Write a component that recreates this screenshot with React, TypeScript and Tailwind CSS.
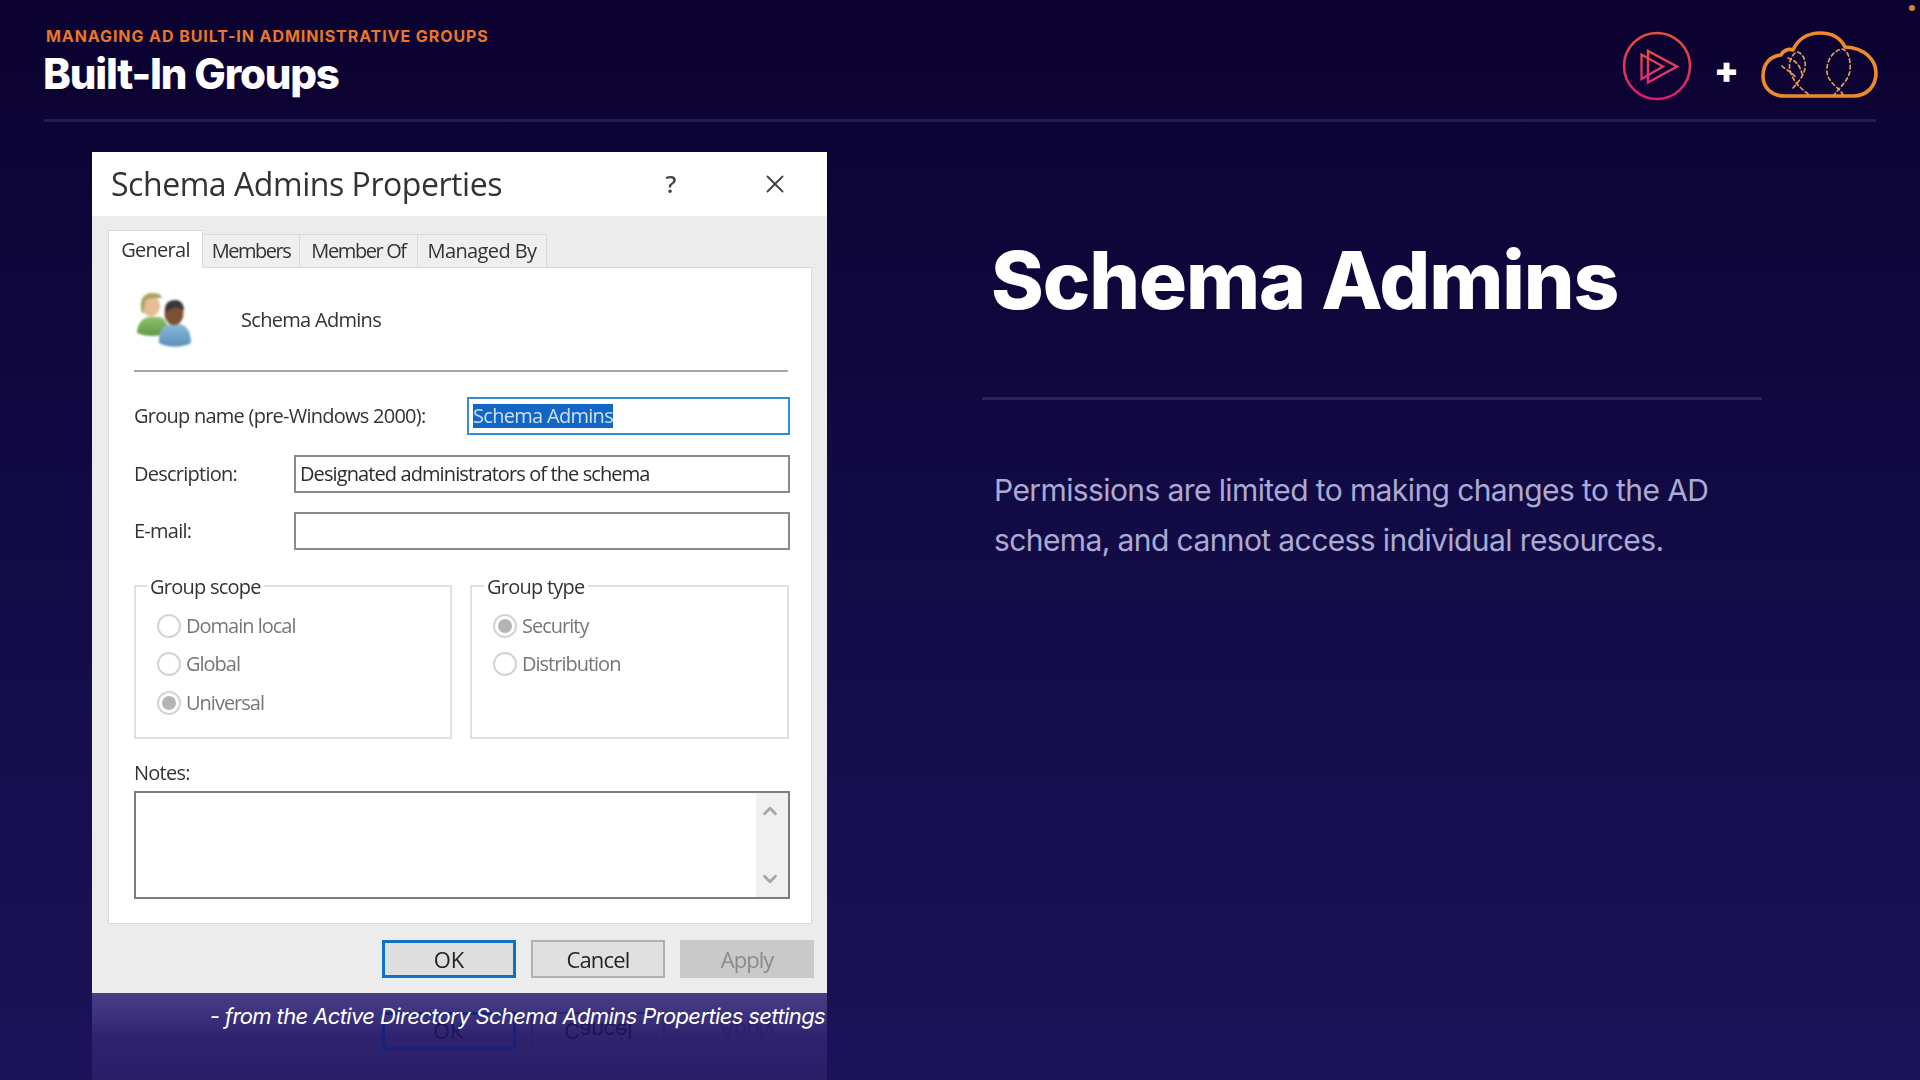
import { ChevronDown, ChevronUp, X } from 'lucide-react';

const dialogFont = { fontFamily: '"Open Sans", "Noto Sans", sans-serif' };

function PluralsightLogo() {
  return (
    <svg width="72" height="72" viewBox="0 0 72 72" fill="none" className="shrink-0">
      <defs>
        <linearGradient id="ps" x1="0" y1="0" x2="0" y2="1">
          <stop offset="0" stopColor="#e8503f" />
          <stop offset="1" stopColor="#e0186f" />
        </linearGradient>
        <linearGradient id="pt" gradientUnits="userSpaceOnUse" x1="0" y1="18" x2="0" y2="54">
          <stop offset="0" stopColor="#e8503f" />
          <stop offset="1" stopColor="#e0287a" />
        </linearGradient>
      </defs>
      <circle cx="37" cy="35" r="33" stroke="url(#ps)" strokeWidth="2.6" />
      <path d="M28 20V51.5L57 35.5Z" stroke="url(#pt)" strokeWidth="2.4" />
      <path d="M21.5 23.5V48L43 35.5Z" stroke="url(#pt)" strokeWidth="2.2" />
    </svg>
  );
}

function CloudLogo() {
  return (
    <svg width="118" height="68" viewBox="11 11 118 68" fill="none" className="-mr-[3px] shrink-0">
      <path
        d="M34 76H103C117 76 126 66 126 53C126 40 115 28 95 27C90 17 80 13 70 13C58 13 48 19 43 30C38 28 33 31 31 35C20 36 13 44 13 56C13 68 22 76 34 76Z"
        stroke="#ee8a2a"
        strokeWidth="3.6"
        strokeLinejoin="round"
      />
      <g stroke="#e59a5a" strokeWidth="1.7" strokeDasharray="3.5 3" strokeLinecap="round">
        <path d="M93 75C90 68 78 63 77 52C76 40 84 30 92 29C98 30 101 40 100 50C99 60 90 67 84 75" />
        <path d="M58 74C50 68 42 60 40 50C38 42 42 34 47 32C53 33 56 40 55 48C54 56 48 62 43 68" />
        <path d="M32 46C36 50 42 52 46 58" />
        <path d="M38 38C44 40 50 44 52 54" />
      </g>
    </svg>
  );
}

function GroupIcon() {
  return (
    <svg width="60" height="60" viewBox="0 0 60 60" className="mt-[2px] shrink-0 blur-[0.8px]">
      <defs>
        <linearGradient id="gr" x1="0" y1="0" x2="0" y2="1">
          <stop offset="0" stopColor="#8dc26a" />
          <stop offset="1" stopColor="#5f9a45" />
        </linearGradient>
        <linearGradient id="bl" x1="0" y1="0" x2="0" y2="1">
          <stop offset="0" stopColor="#8cbbdc" />
          <stop offset="1" stopColor="#5a8fb8" />
        </linearGradient>
      </defs>
      <path d="M3 42C3 32 9 27 15 26H25C31 27 34 32 34 42C24 46 12 46 3 42Z" fill="url(#gr)" />
      <ellipse cx="17" cy="15" rx="9" ry="10.5" fill="#e6bd97" />
      <path d="M7 17C6 7 11 2 18 2C23 2 27 3 28 7C22 7 15 7 12 9C11 12 10 19 9 23C8 22 7 20 7 17Z" fill="#a9a35f" />
      <path d="M25 52C24 40 30 33 38 33H44C52 33 57 40 57 52C48 57 34 57 25 52Z" fill="url(#bl)" />
      <ellipse cx="40" cy="23" rx="9.5" ry="11" fill="#7a5135" />
      <path d="M31 22C30 12 35 9 41 9C47 9 50 13 50 20C46 15 38 15 31 22Z" fill="#3b3636" />
    </svg>
  );
}

function Tab({ label, active, className }: { label: string; active?: boolean; className: string }) {
  if (active) {
    return (
      <div className={`-mb-px z-10 flex h-[38px] items-center justify-center border border-b-0 border-[#d9d9d9] bg-white text-[20px] text-[#333] ${className}`}>
        {label}
      </div>
    );
  }
  return (
    <div className={`flex h-[33px] items-center justify-center border border-b-0 border-l-0 border-[#d9d9d9] bg-[#efefef] text-[20px] text-[#333] ${className}`}>
      {label}
    </div>
  );
}

function Radio({ label, checked, className }: { label: string; checked?: boolean; className?: string }) {
  return (
    <div className={`flex h-[24px] items-center gap-[5px] ${className ?? ''}`}>
      <span className="flex h-[24px] w-[24px] items-center justify-center rounded-full border-2 border-[#d4d4d4] bg-white">
        {checked && <span className="h-[14px] w-[14px] rounded-full bg-[#b4b4b4]" />}
      </span>
      <span className="text-[20px] tracking-[-1px] text-[#777]">{label}</span>
    </div>
  );
}

function Field({ label, value, labelWidth }: { label: string; value?: string; labelWidth: string }) {
  return (
    <div className="flex h-[38px] items-center">
      <span className={`text-[20px] tracking-[-0.75px] text-[#333] ${labelWidth}`}>{label}</span>
      <div className="flex h-[38px] w-[496px] items-center border-2 border-[#8a8a8a] bg-white pl-[4px] text-[20px] tracking-[-0.9px] text-[#2c2c2c]">
        {value}
      </div>
    </div>
  );
}

function ActionButtons() {
  return (
    <div className="flex justify-end gap-[15px]">
      <div className="flex h-[38px] w-[134px] items-center justify-center border-[3px] border-[#0f72c6] bg-[#dedede] text-[22px] text-[#222]">
        OK
      </div>
      <div className="flex h-[38px] w-[134px] items-center justify-center border-2 border-[#b0b0b0] bg-[#e0e0e0] text-[22px] tracking-[-0.8px] text-[#222]">
        Cancel
      </div>
      <div className="flex h-[38px] w-[134px] items-center justify-center bg-[#c9c9c9] text-[22px] tracking-[-1px] text-[#8a8a8a]">
        Apply
      </div>
    </div>
  );
}

// faint mirror image of the dialog buttons under the window
function ButtonReflection() {
  return (
    <div className="flex w-[722px] -scale-y-100 justify-end gap-[15px] blur-[0.7px]">
      <div className="flex h-[38px] w-[134px] items-center justify-center border-[3px] border-[#16237e] text-[22px] text-[#1c1654]">
        OK
      </div>
      <div className="flex h-[38px] w-[134px] items-center justify-center border-2 border-[#2b2169] text-[22px] tracking-[-0.8px] text-[#1c1654]">
        Cancel
      </div>
      <div className="flex h-[38px] w-[134px] items-center justify-center text-[22px] tracking-[-1px] text-[#2b2169]">
        Apply
      </div>
    </div>
  );
}

function Dialog() {
  return (
    <div className="flex h-[841px] w-[735px] flex-col bg-[#ececec] blur-[0.35px]" style={dialogFont}>
      <div className="flex h-[64px] items-center bg-white pl-[19px]">
        <span className="w-[550px] text-[32px] tracking-[-0.45px] text-[#333]">Schema Admins Properties</span>
        <span className="w-[20px] text-center text-[24px] font-semibold text-[#444]">?</span>
        <X className="ml-[79px] text-[#444]" size={30} strokeWidth={1.5} />
      </div>

      <div className="pl-[16px] pt-[14px]">
        <div className="flex h-[37px] items-end">
          <Tab label="General" active className="w-[95px] tracking-[-0.7px]" />
          <Tab label="Members" className="w-[97px] tracking-[-1.5px]" />
          <Tab label="Member Of" className="w-[118px] tracking-[-1.4px]" />
          <Tab label="Managed By" className="w-[129px] tracking-[-0.6px]" />
        </div>

        <div className="h-[657px] w-[704px] border border-[#d9d9d9] bg-white pl-[25px]">
          <div className="mt-[24px] flex h-[56px] items-center">
            <GroupIcon />
            <span className="ml-[47px] text-[20px] tracking-[-0.7px] text-[#333]">Schema Admins</span>
          </div>
          <div className="mt-[22px] h-[2px] w-[654px] bg-[#a6a6a6]" />

          <div className="mt-[25px] flex h-[38px] items-center">
            <span className="w-[333px] text-[20px] tracking-[-0.75px] text-[#333]">Group name (pre-Windows 2000):</span>
            <div className="flex h-[38px] w-[323px] items-center border-2 border-[#2f8fd8] bg-white pl-[4px]">
              <span className="bg-[#1166c6] text-[20px] leading-[24px] tracking-[-0.7px] text-[#cfe0f4]">Schema Admins</span>
            </div>
          </div>
          <div className="mt-[20px]">
            <Field label="Description:" value="Designated administrators of the schema" labelWidth="w-[160px]" />
          </div>
          <div className="mt-[19px]">
            <Field label="E-mail:" labelWidth="w-[160px]" />
          </div>

          <div className="mt-[35px] flex gap-[18px]">
            <div className="relative h-[154px] w-[318px] border-2 border-[#e0e0e0] pl-[21px] pt-[27px]">
              <span className="absolute -top-[15px] left-[11px] bg-white px-[3px] text-[20px] tracking-[-0.75px] text-[#333]">Group scope</span>
              <Radio label="Domain local" />
              <Radio label="Global" className="mt-[14px]" />
              <Radio label="Universal" checked className="mt-[15px]" />
            </div>
            <div className="relative h-[154px] w-[319px] border-2 border-[#e0e0e0] pl-[21px] pt-[27px]">
              <span className="absolute -top-[15px] left-[12px] bg-white px-[3px] text-[20px] tracking-[-0.75px] text-[#333]">Group type</span>
              <Radio label="Security" checked />
              <Radio label="Distribution" className="mt-[14px]" />
            </div>
          </div>

          <div className="mt-[22px] h-[24px] text-[20px] leading-[24px] tracking-[-0.75px] text-[#333]">Notes:</div>
          <div className="mt-[6px] flex h-[108px] w-[656px] justify-end border-2 border-[#7d7d7d] bg-white">
            <div className="flex w-[32px] flex-col items-center justify-between bg-[#f0f0f0] py-[7px] pr-[5px]">
              <ChevronUp className="text-[#a6a6a6]" size={22} strokeWidth={3} />
              <ChevronDown className="text-[#a6a6a6]" size={22} strokeWidth={3} />
            </div>
          </div>
        </div>

        <div className="mt-[16px] w-[706px]">
          <ActionButtons />
        </div>
      </div>
    </div>
  );
}

export default function App() {
  return (
    <div
      className="relative h-[1080px] w-[1920px] overflow-hidden bg-gradient-to-b from-[#0b0230] via-[#130c48] via-55% to-[#1b1258] px-[44px]"
      style={{ fontFamily: 'Inter, sans-serif' }}
    >
      <span className="absolute right-[5px] top-[5px] h-[6px] w-[6px] rounded-full bg-[#e0813a]" />

      <header className="flex h-[119px] items-start justify-between">
        <div className="pt-[25px]">
          <p className="pl-[2px] text-[16px] font-bold leading-[22px] tracking-[0.92px] text-[#e8762b]">
            MANAGING AD BUILT-IN ADMINISTRATIVE GROUPS
          </p>
          <h1 className="-ml-[1px] mt-[2px] text-[42px] font-extrabold leading-[50px] tracking-[-1.2px] text-white">Built-In Groups</h1>
        </div>
        <div className="flex items-start pt-[31px]">
          <PluralsightLogo />
          <span className="mx-[22px] mt-[21px] text-[36px] font-black leading-[36px] text-white">+</span>
          <CloudLogo />
        </div>
      </header>
      <div className="h-[3px] w-[1832px] bg-[#221b56]" />

      <main className="flex pt-[30px]">
        <div className="relative ml-[48px] w-[735px]">
          <Dialog />
          <div className="h-[87px] overflow-hidden bg-gradient-to-b from-[#4a3f86] via-[#2f2370] to-[#2a1d66] pt-[19px]">
            <ButtonReflection />
          </div>
          <p className="absolute bottom-[50px] right-[2px] text-[22px] italic leading-[28px] tracking-[-0.62px] text-white">
            - from the Active Directory Schema Admins Properties settings
          </p>
        </div>

        <section className="ml-[155px] w-[780px]">
          <h2 className="mt-[78px] pl-[9px] text-[80px] font-extrabold leading-[100px] tracking-[-1.1px] text-white">Schema Admins</h2>
          <div className="mt-[67px] h-[3px] w-[780px] bg-[#2a2260]" />
          <p className="mt-[65px] pl-[12px] text-[30px] leading-[50px] tracking-[-0.6px] text-[#abaad2]">
            Permissions are limited to making changes to the AD schema, and cannot access individual resources.
          </p>
        </section>
      </main>
    </div>
  );
}
